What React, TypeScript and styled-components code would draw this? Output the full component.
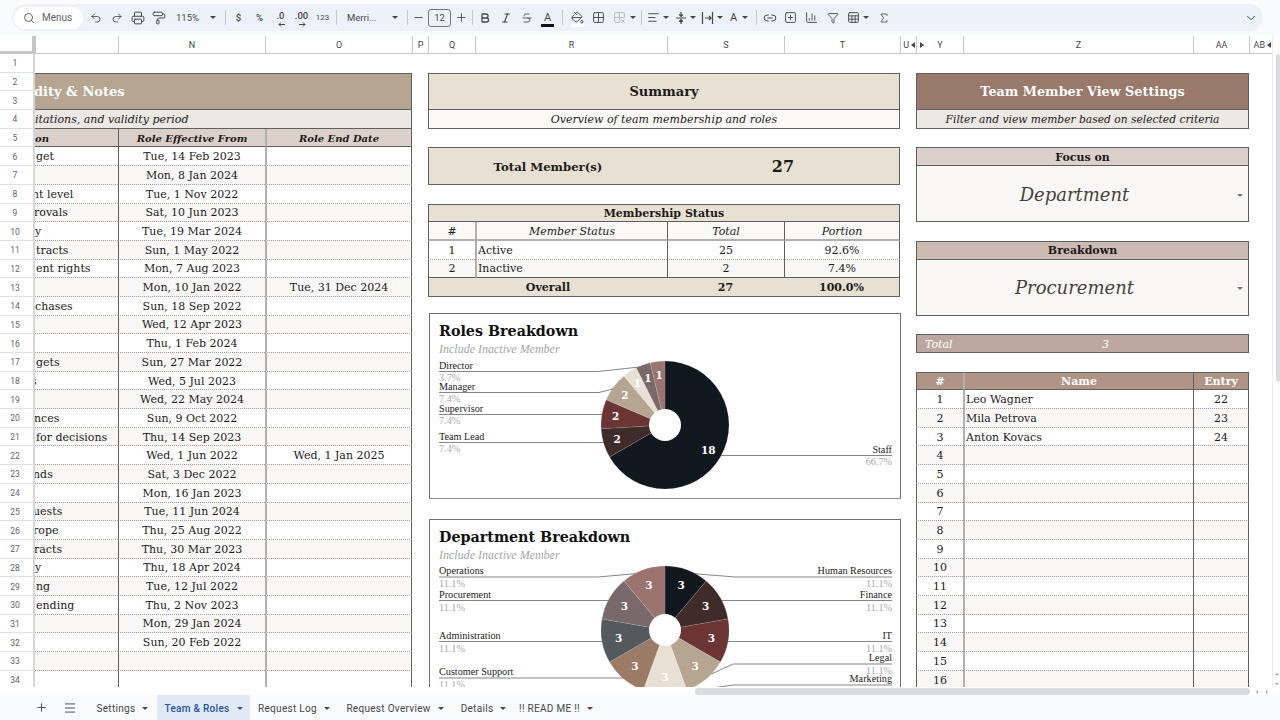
import React from 'react'
import styled, { createGlobalStyle, css } from 'styled-components'
import {
  Search, Undo2, Redo2, Printer, PaintRoller, Minus, Plus, Bold, Italic, Strikethrough,
  PaintBucket, Grid2x2, Grid2x2X, AlignLeft, Link2, SquarePlus, ChartColumn, Funnel, Sheet as SheetIcon,
  Sigma, ChevronDown, Menu,
} from 'lucide-react'

const SERIF = `"DejaVu Serif", "Liberation Serif", serif`
const CHART_SERIF = `"Liberation Serif", serif`
const UI = `Roboto, "Liberation Sans", sans-serif`

const Global = createGlobalStyle`
  html, body { margin: 0; padding: 0; background: #f9fbfd; overflow: hidden; }
  * { box-sizing: border-box; }
`

const Page = styled.div`
  width: 1280px;
  height: 720px;
  display: flex;
  flex-direction: column;
  background: #f9fbfd;
  overflow: hidden;
  font-family: ${UI};
`

/* ---------- toolbar ---------- */

const ToolbarWrap = styled.div`
  height: 36px;
  flex: none;
  padding: 4px 17px 5px 12px;
`

const Pill = styled.div`
  height: 27px;
  border-radius: 14px;
  background: #edf2fa;
  display: flex;
  align-items: center;
  padding-left: 2px;
  color: #444746;
`

const SearchBox = styled.div`
  width: 69px;
  height: 22px;
  border-radius: 11px;
  background: #fff;
  display: flex;
  align-items: center;
  gap: 7px;
  padding-left: 9px;
  font-size: 10px;
  color: #5f6368;
  margin-right: 2px;
`

const Tool = styled.div<{ $w?: number; $muted?: boolean }>`
  width: ${p => p.$w ?? 21}px;
  height: 20px;
  flex: none;
  display: flex;
  align-items: center;
  justify-content: center;
  font-size: 9px;
  color: ${p => (p.$muted ? '#b4b8bc' : '#444746')};
  position: relative;
`

const ToolText = styled.span<{ $size?: number; $weight?: number }>`
  font-size: ${p => p.$size ?? 9}px;
  font-weight: ${p => p.$weight ?? 400};
  white-space: nowrap;
`

const DecimalText = styled(ToolText)`
  margin-top: -5px;
`

const DecimalArrow = styled.svg`
  position: absolute;
  left: 50%;
  bottom: 1px;
  margin-left: -3px;
`

const Caret = styled.i`
  display: inline-block;
  width: 0;
  height: 0;
  flex: none;
  border-left: 3px solid transparent;
  border-right: 3px solid transparent;
  border-top: 3px solid #444746;
`

const Sep = styled.div<{ $mx?: number }>`
  width: 1px;
  height: 15px;
  flex: none;
  background: #c7c7c7;
  margin: 0 ${p => p.$mx ?? 3}px;
`

const SizeBox = styled.div`
  width: 23px;
  height: 18px;
  flex: none;
  margin-left: 3px;
  border: 1px solid #747775;
  border-radius: 3px;
  display: flex;
  align-items: center;
  justify-content: center;
  font-size: 9.5px;
  color: #444746;
`

const ColorBar = styled.span<{ $color: string }>`
  position: absolute;
  left: 4px;
  right: 4px;
  bottom: 1px;
  height: 2.5px;
  background: ${p => p.$color};
`

const Collapse = styled.div`
  margin-left: auto;
  margin-right: 5px;
  display: flex;
`

const WithCaret = styled.div<{ $w: number; $gap?: number }>`
  width: ${p => p.$w}px;
  flex: none;
  display: flex;
  align-items: center;
  gap: ${p => p.$gap ?? 3}px;
  justify-content: center;
`

const Labelled = styled.div<{ $w: number; $pl: number; $pr: number }>`
  width: ${p => p.$w}px;
  flex: none;
  display: flex;
  align-items: center;
  justify-content: space-between;
  padding: 0 ${p => p.$pr}px 0 ${p => p.$pl}px;
`

const ic = { size: 14, strokeWidth: 1.7 }

const Toolbar = () => (
  <ToolbarWrap>
    <Pill>
      <SearchBox><Search size={12} strokeWidth={2} />Menus</SearchBox>
      <Tool><Undo2 {...ic} size={12} /></Tool>
      <Tool><Redo2 {...ic} size={12} /></Tool>
      <Tool><Printer {...ic} /></Tool>
      <Tool><PaintRoller {...ic} /></Tool>
      <Labelled $w={54} $pl={7} $pr={7}><ToolText $size={9.5}>115%</ToolText><Caret /></Labelled>
      <Sep $mx={2} />
      <Tool><ToolText $size={9.5} $weight={500}>$</ToolText></Tool>
      <Tool><ToolText $size={9.5} $weight={500}>%</ToolText></Tool>
      <Tool>
        <DecimalText $size={9.5} $weight={500}>.0</DecimalText>
        <DecimalArrow width="7" height="5" viewBox="0 0 7 5" fill="none" stroke="#444746" strokeWidth="1"><path d="M7 2.5H1M3 .5l-2 2 2 2" /></DecimalArrow>
      </Tool>
      <Tool>
        <DecimalText $size={9.5} $weight={500}>.00</DecimalText>
        <DecimalArrow width="7" height="5" viewBox="0 0 7 5" fill="none" stroke="#444746" strokeWidth="1"><path d="M0 2.5h6M4 .5l2 2-2 2" /></DecimalArrow>
      </Tool>
      <Tool><ToolText $size={8}>123</ToolText></Tool>
      <Sep $mx={3} />
      <Labelled $w={64} $pl={7} $pr={6}><ToolText $size={9.5}>Merri...</ToolText><Caret /></Labelled>
      <Sep $mx={3} />
      <Tool $w={14}><Minus size={13} strokeWidth={1.6} /></Tool>
      <SizeBox>12</SizeBox>
      <Tool $w={20}><Plus size={13} strokeWidth={1.6} /></Tool>
      <Sep $mx={1} />
      <Tool><Bold {...ic} size={12} strokeWidth={2.6} /></Tool>
      <Tool><Italic {...ic} size={12} strokeWidth={2.2} /></Tool>
      <Tool><Strikethrough {...ic} size={12} /></Tool>
      <Tool><ToolText $size={11}>A</ToolText><ColorBar $color="#111" /></Tool>
      <Sep $mx={4} />
      <Tool><PaintBucket {...ic} size={13} /><ColorBar $color="#fff" /></Tool>
      <Tool><Grid2x2 {...ic} size={13} /></Tool>
      <WithCaret $w={30}><Tool $w={14} $muted><Grid2x2X {...ic} size={13} /></Tool><Caret /></WithCaret>
      <Sep $mx={2} />
      <WithCaret $w={28}><AlignLeft {...ic} size={13} /><Caret /></WithCaret>
      <WithCaret $w={27}>
        <svg width="12" height="14" viewBox="0 0 12 14" fill="none" stroke="#444746" strokeWidth="1.2">
          <path d="M1 7h10M6 1v4M4.2 3.5 6 5.3l1.8-1.8M6 13V9M4.2 10.5 6 8.7l1.8 1.8" />
        </svg>
        <Caret />
      </WithCaret>
      <WithCaret $w={25}>
        <svg width="13" height="14" viewBox="0 0 13 14" fill="none" stroke="#444746" strokeWidth="1.2">
          <path d="M1.5 1v12M11.5 1v12M4 7h6M8 5l2 2-2 2" />
        </svg>
        <Caret />
      </WithCaret>
      <WithCaret $w={30} $gap={5}><ToolText $size={11}>A</ToolText><Caret /></WithCaret>
      <Sep $mx={2} />
      <Tool><Link2 {...ic} /></Tool>
      <Tool><SquarePlus {...ic} size={13} /></Tool>
      <Tool><ChartColumn {...ic} size={13} /></Tool>
      <Tool><Funnel {...ic} size={12} /></Tool>
      <WithCaret $w={30}><SheetIcon {...ic} size={13} /><Caret /></WithCaret>
      <Tool><Sigma {...ic} size={12} /></Tool>
      <Collapse><ChevronDown size={14} strokeWidth={1.7} /></Collapse>
    </Pill>
  </ToolbarWrap>
)

/* ---------- sheet grid ---------- */

const RH = 18.69

const SheetArea = styled.div`
  flex: none;
  height: 651px;
  display: flex;
`

const Grid = styled.div`
  width: 1272px;
  height: 651px;
  overflow: hidden;
  background: #fff;
  display: grid;
  grid-template-columns: 35px 83px 147px 147px 16px 47px 192px 117px 116px 16px 47px 230px 56px 23px;
  grid-template-rows: 18px repeat(34, ${RH}px);
`

const VScroll = styled.div`
  width: 8px;
  background: #fff;
  border-left: 1px solid #ececec;
  padding: 18px 0 2px 3px;
  display: flex;
  flex-direction: column;
`

const VThumb = styled.div`
  height: 328px;
  border-radius: 3px;
  background: #dadce0;
`

const ScrollArrows = styled.div`
  margin-top: auto;
  margin-left: -1px;
  display: flex;
  flex-direction: column;
  gap: 8px;
`

const TinyArrow = styled.i<{ $dir: 'up' | 'down' | 'left' | 'right' }>`
  display: block;
  width: 0;
  height: 0;
  ${p => (p.$dir === 'up' || p.$dir === 'down'
    ? `border-left: 2px solid transparent; border-right: 2px solid transparent; border-${p.$dir === 'up' ? 'bottom' : 'top'}: 2px solid #9aa0a6;`
    : `border-top: 2px solid transparent; border-bottom: 2px solid transparent; border-${p.$dir === 'left' ? 'right' : 'left'}: 2px solid #9aa0a6;`)}
`

type Place = { $col: string | number; $row: string | number }

const placed = css<Place>`
  grid-column: ${p => p.$col};
  grid-row: ${p => p.$row};
`

const Corner = styled.div<Place>`
  ${placed}
  background: #fff;
  border-right: 3px solid #c4c7c5;
  border-bottom: 3px solid #c4c7c5;
  z-index: 3;
`

const ColHead = styled.div<Place & { $justify?: string; $pad?: number }>`
  ${placed}
  background: #fff;
  border-left: 1px solid #c7c7c7;
  border-bottom: 1px solid #c7c7c7;
  font-size: 9px;
  color: #444746;
  display: flex;
  align-items: center;
  justify-content: ${p => p.$justify ?? 'center'};
  padding-right: ${p => p.$pad ?? 0}px;
  gap: 2px;
  overflow: hidden;
  position: relative;
`

const HiddenMark = styled.i<{ $dir: 'left' | 'right' }>`
  width: 0;
  height: 0;
  border-top: 3px solid transparent;
  border-bottom: 3px solid transparent;
  ${p => (p.$dir === 'left' ? 'border-right: 4px solid #444;' : 'border-left: 4px solid #444; position: absolute; left: 3px; top: 6px;')}
`

const RowHead = styled.div<Place>`
  ${placed}
  background: #fff;
  border-right: 2px solid #d4d6d8;
  border-bottom: 1px solid #dfe1e3;
  font-size: 8.5px;
  color: #5f6368;
  display: flex;
  align-items: center;
  justify-content: center;
  padding: 1px 3px 0 0;
  z-index: 2;
`

const edge = (v?: string) => v ?? 'none'

type CellProps = Place & {
  $bg?: string
  $top?: string
  $right?: string
  $bottom?: string
  $left?: string
  $align?: string
  $pad?: number
  $color?: string
  $size?: number
  $weight?: number
  $italic?: boolean
  $indent?: number
}

const Cell = styled.div<CellProps>`
  ${placed}
  min-width: 0;
  overflow: hidden;
  white-space: nowrap;
  display: flex;
  align-items: center;
  justify-content: ${p => p.$align ?? 'center'};
  padding: 1px ${p => p.$pad ?? 0}px 0;
  background: ${p => p.$bg ?? 'transparent'};
  border-top: ${p => edge(p.$top)};
  border-right: ${p => edge(p.$right)};
  border-bottom: ${p => edge(p.$bottom)};
  border-left: ${p => edge(p.$left)};
  color: ${p => p.$color ?? '#1c1a19'};
  font-family: ${SERIF};
  font-size: ${p => p.$size ?? 11}px;
  font-weight: ${p => p.$weight ?? 400};
  font-style: ${p => (p.$italic ? 'italic' : 'normal')};
  & > span { margin-left: ${p => p.$indent ?? 0}px; }
`

const DropArrow = styled.i`
  position: absolute;
  right: 5px;
  top: 50%;
  width: 0;
  height: 0;
  border-left: 3px solid transparent;
  border-right: 3px solid transparent;
  border-top: 3px solid #8a6f62;
`

const DropCell = styled(Cell)`
  position: relative;
  padding-right: 16px;
`

/* ---------- charts ---------- */

const ChartBox = styled.div<Place & { $h: number; $mt: number }>`
  ${placed}
  align-self: start;
  height: ${p => p.$h}px;
  margin: ${p => p.$mt}px -1px 0 1px;
  background: #fff;
  border: 1px solid #6f6f6f;
  border-bottom-color: #8c8c8c;
  z-index: 1;
`

const ChartTitle = styled.text`
  font-family: ${SERIF};
  font-weight: 700;
  font-size: 14.3px;
  fill: #111;
`

const ChartSub = styled.text`
  font-family: ${CHART_SERIF};
  font-style: italic;
  font-size: 12px;
  fill: #a5a5a5;
`

const LegendName = styled.text`
  font-family: ${CHART_SERIF};
  font-size: 10.2px;
  fill: #222;
`

const LegendPct = styled.text`
  font-family: ${CHART_SERIF};
  font-size: 10.2px;
  fill: #a8a8a8;
`

const SliceNum = styled.text`
  font-family: ${SERIF};
  font-weight: 700;
  font-size: 10.5px;
  fill: #fff;
  text-anchor: middle;
`

type Slice = { v: number; color: string }
type Leg = { name: string; pct: string; y: number; base?: number; pctBase?: number; side: 'l' | 'r'; to: [number, number][] }

const Pie = ({ cx, cy, slices, big }: { cx: number; cy: number; slices: Slice[]; big?: boolean }) => {
  const total = slices.reduce((s, x) => s + x.v, 0)
  const r = 64
  let acc = 0
  let run = 0
  const pt = (a: number, rad: number) => [cx + rad * Math.sin(a), cy - rad * Math.cos(a)]
  return (
    <g>
      {slices.map((s, i) => {
        const a0 = (acc / total) * Math.PI * 2
        acc += s.v
        const a1 = (acc / total) * Math.PI * 2
        const [x0, y0] = pt(a0, r)
        const [x1, y1] = pt(a1, r)
        const large = a1 - a0 > Math.PI ? 1 : 0
        return (
          <path
            key={i}
            d={`M${cx} ${cy}L${x0} ${y0}A${r} ${r} 0 ${large} 1 ${x1} ${y1}Z`}
            fill={s.color}
            stroke="#fff"
            strokeOpacity={0.18}
            strokeWidth={0.6}
          />
        )
      })}
      <circle cx={cx} cy={cy} r={16} fill="#fff" />
      {slices.map((s, i) => {
        const mid = ((run + s.v / 2) / total) * Math.PI * 2
        run += s.v
        const [x, y] = pt(mid, big ? 47 : s.v === 1 ? 50 : 50)
        return <SliceNum key={i} x={x} y={y + 3.5}>{s.v}</SliceNum>
      })}
    </g>
  )
}

const Legend = ({ leg, width }: { leg: Leg; width: number }) => {
  const startX = leg.side === 'l' ? 10 : width - 9
  const points = [[startX, leg.y], ...leg.to].map(p => p.join(',')).join(' ')
  const last = leg.to[leg.to.length - 1]
  const anchor = leg.side === 'l' ? 'start' : 'end'
  return (
    <g>
      <polyline points={points} fill="none" stroke="#777" strokeWidth={0.9} />
      <circle cx={last[0]} cy={last[1]} r={1.5} fill="#8a8a8a" />
      <LegendName x={startX} y={leg.base ?? leg.y - 3} textAnchor={anchor}>{leg.name}</LegendName>
      <LegendPct x={startX} y={leg.pctBase ?? leg.y + 10} textAnchor={anchor}>{leg.pct}</LegendPct>
    </g>
  )
}

const ROLE_SLICES: Slice[] = [
  { v: 18, color: '#10171f' },
  { v: 2, color: '#3f2c2a' },
  { v: 2, color: '#6a3534' },
  { v: 2, color: '#b5a591' },
  { v: 1, color: '#e8e0d2' },
  { v: 1, color: '#79696a' },
  { v: 1, color: '#9b7470' },
]

const ROLE_LEGEND: Leg[] = [
  { name: 'Director', pct: '3.7%', y: 58.5, base: 56, pctBase: 68, side: 'l', to: [[169, 58.5], [229, 52]] },
  { name: 'Manager', pct: '7.4%', y: 79.5, base: 77, pctBase: 89, side: 'l', to: [[170, 79.5], [184, 76]] },
  { name: 'Supervisor', pct: '7.4%', y: 101.5, base: 99, pctBase: 111, side: 'l', to: [[176, 101.5]] },
  { name: 'Team Lead', pct: '7.4%', y: 129.5, base: 127, pctBase: 139, side: 'l', to: [[178, 129.5]] },
  { name: 'Staff', pct: '66.7%', y: 142.5, base: 140, pctBase: 152, side: 'r', to: [[288, 142.5]] },
]

const DEPT_SLICES: Slice[] = [
  '#10171f', '#3f2c2a', '#6a3534', '#b5a591', '#e8e0d2', '#9b7a66', '#54595e', '#79696a', '#9b7470',
].map(color => ({ v: 3, color }))

const DEPT_LEGEND: Leg[] = [
  { name: 'Operations', pct: '11.1%', y: 58, side: 'l', to: [[169, 58], [214, 54]] },
  { name: 'Procurement', pct: '11.1%', y: 81.5, side: 'l', to: [[183, 81.5]] },
  { name: 'Administration', pct: '11.1%', y: 122.5, side: 'l', to: [[176, 122.5]] },
  { name: 'Customer Support', pct: '11.1%', y: 159, side: 'l', to: [[198, 159]] },
  { name: 'Human Resources', pct: '11.1%', y: 58, side: 'r', to: [[306, 58], [257, 54]] },
  { name: 'Finance', pct: '11.1%', y: 81.5, side: 'r', to: [[289, 81.5]] },
  { name: 'IT', pct: '11.1%', y: 122.5, side: 'r', to: [[296, 122.5]] },
  { name: 'Legal', pct: '11.1%', y: 145, side: 'r', to: [[304, 145], [276, 158]] },
  { name: 'Marketing', pct: '11.1%', y: 166, side: 'r', to: [[304, 166], [262, 172]] },
]

const Chart = ({ title, h, cy, mt, slices, legend, big, ...place }: Place & {
  title: string; h: number; cy: number; mt: number; slices: Slice[]; legend: Leg[]; big?: boolean
}) => (
  <ChartBox {...place} $h={h} $mt={mt}>
    <svg width={470} height={h - 2} viewBox={`1 1 470 ${h - 2}`} style={{ display: 'block' }}>
      <ChartTitle x={10} y={23}>{title}</ChartTitle>
      <ChartSub x={10} y={40}>Include Inactive Member</ChartSub>
      {legend.map(l => <Legend key={l.name} leg={l} width={472} />)}
      <Pie cx={236} cy={cy} slices={slices} big={big} />
    </svg>
  </ChartBox>
)

/* ---------- data ---------- */

const DARK = '1px solid #5f5f5f'
const GREY = '2px solid #b0b0b0'
const DOT = '1px dotted #9a9a9a'
const SHADE = '#f9f8f6'

const ROLE_ROWS: [string, number, string, string?][] = [
  ['get', 0, 'Tue, 14 Feb 2023'],
  ['', 0, 'Mon, 8 Jan 2024'],
  ['nt level', -4, 'Tue, 1 Nov 2022'],
  ['rovals', -2, 'Sat, 10 Jun 2023'],
  ['y', -1, 'Tue, 19 Mar 2024'],
  ['tracts', 0, 'Sun, 1 May 2022'],
  ['ent rights', 0, 'Mon, 7 Aug 2023'],
  ['', 0, 'Mon, 10 Jan 2022', 'Tue, 31 Dec 2024'],
  ['chases', -1, 'Sun, 18 Sep 2022'],
  ['', 0, 'Wed, 12 Apr 2023'],
  ['', 0, 'Thu, 1 Feb 2024'],
  ['gets', 0, 'Sun, 27 Mar 2022'],
  ['s', -5, 'Wed, 5 Jul 2023'],
  ['', 0, 'Wed, 22 May 2024'],
  ['nces', -2, 'Sun, 9 Oct 2022'],
  ['for decisions', 0, 'Thu, 14 Sep 2023'],
  ['', 0, 'Wed, 1 Jun 2022', 'Wed, 1 Jan 2025'],
  ['nds', -3, 'Sat, 3 Dec 2022'],
  ['', 0, 'Mon, 16 Jan 2023'],
  ['uests', -3, 'Tue, 11 Jun 2024'],
  ['rope', -3, 'Thu, 25 Aug 2022'],
  ['racts', -2, 'Thu, 30 Mar 2023'],
  ['y', -1, 'Thu, 18 Apr 2024'],
  ['ng', 0, 'Tue, 12 Jul 2022'],
  ['ending', 0, 'Thu, 2 Nov 2023'],
  ['', 0, 'Mon, 29 Jan 2024'],
  ['', 0, 'Sun, 20 Feb 2022'],
  ['', 0, ''],
  ['', 0, ''],
]

const MEMBERS: [string, string][] = [['Leo Wagner', '22'], ['Mila Petrova', '23'], ['Anton Kovacs', '24']]

const COLS: [string, number][] = [
  ['', 2], ['N', 3], ['O', 4], ['P', 5], ['Q', 6], ['R', 7], ['S', 8], ['T', 9],
]

// grid line of a sheet row: the first grid row is the column header
const r = (n: number) => n + 1
const span = (a: number, b: number) => `${r(a)} / ${r(b) + 1}`

const LeftTable = () => (
  <>
    <Cell $col="2 / 5" $row={span(2, 3)} $bg="#b5a591" $top={DARK} $right={DARK} $bottom={DARK} $align="flex-start" $color="#fff" $size={13} $weight={700} $indent={-1}><span>dity &amp; Notes</span></Cell>
    <Cell $col="2 / 5" $row={r(4)} $bg="#ece8e3" $right={DARK} $bottom={DARK} $align="flex-start" $italic $size={11}><span>itations, and validity period</span></Cell>
    <Cell $col={2} $row={r(5)} $bg="#dcd1ca" $bottom={DARK} $align="flex-start" $italic $weight={700} $size={10}><span>on</span></Cell>
    <Cell $col={3} $row={r(5)} $bg="#dcd1ca" $left={DARK} $bottom={DARK} $italic $weight={700} $size={10}>Role Effective From</Cell>
    <Cell $col={4} $row={r(5)} $bg="#dcd1ca" $left={GREY} $right={DARK} $bottom={DARK} $italic $weight={700} $size={10}>Role End Date</Cell>
    {ROLE_ROWS.map(([note, indent, from, to], i) => {
      const row = r(6 + i)
      const bg = i % 2 ? SHADE : '#fff'
      return (
        <React.Fragment key={i}>
          <Cell $col={2} $row={row} $bg={bg} $bottom={DOT} $align="flex-start" $indent={indent + 1}><span>{note}</span></Cell>
          <Cell $col={3} $row={row} $bg={bg} $left={DARK} $bottom={DOT}>{from}</Cell>
          <Cell $col={4} $row={row} $bg={bg} $left={GREY} $right={DARK} $bottom={DOT}>{to}</Cell>
        </React.Fragment>
      )
    })}
  </>
)

const SummaryTable = () => (
  <>
    <Cell $col="6 / 10" $row={span(2, 3)} $bg="#e8e0d2" $top={DARK} $left={DARK} $right={DARK} $bottom={DARK} $size={13} $weight={700}>Summary</Cell>
    <Cell $col="6 / 10" $row={r(4)} $bg="#fbf9f5" $left={DARK} $right={DARK} $bottom={DARK} $italic>Overview of team membership and roles</Cell>
    <Cell $col="6 / 8" $row={span(6, 7)} $bg="#e8e0d2" $top={DARK} $left={DARK} $bottom={DARK} $size={11.7} $weight={700}>Total Member(s)</Cell>
    <Cell $col="8 / 10" $row={span(6, 7)} $bg="#e8e0d2" $top={DARK} $right={DARK} $bottom={DARK} $size={16} $weight={700}>27</Cell>
    <Cell $col="6 / 10" $row={r(9)} $bg="#e8e0d2" $top={DARK} $left={DARK} $right={DARK} $bottom={DARK} $weight={700}>Membership Status</Cell>
    <Cell $col={6} $row={r(10)} $bg="#fbf9f5" $left={DARK} $bottom={GREY} $italic>#</Cell>
    <Cell $col={7} $row={r(10)} $bg="#fbf9f5" $left={GREY} $bottom={GREY} $italic>Member Status</Cell>
    <Cell $col={8} $row={r(10)} $bg="#fbf9f5" $left={DARK} $bottom={GREY} $italic>Total</Cell>
    <Cell $col={9} $row={r(10)} $bg="#fbf9f5" $left={DARK} $right={DARK} $bottom={GREY} $italic>Portion</Cell>
    {[['1', 'Active', '25', '92.6%'], ['2', 'Inactive', '2', '7.4%']].map(([n, name, total, pct], i) => {
      const row = r(11 + i)
      const bg = i ? SHADE : '#fff'
      const bottom = i ? DARK : DOT
      return (
        <React.Fragment key={n}>
          <Cell $col={6} $row={row} $bg={bg} $left={DARK} $bottom={bottom}>{n}</Cell>
          <Cell $col={7} $row={row} $bg={bg} $left={GREY} $bottom={bottom} $align="flex-start" $pad={1}>{name}</Cell>
          <Cell $col={8} $row={row} $bg={bg} $left={DARK} $bottom={bottom}>{total}</Cell>
          <Cell $col={9} $row={row} $bg={bg} $left={DARK} $right={DARK} $bottom={bottom}>{pct}</Cell>
        </React.Fragment>
      )
    })}
    <Cell $col="6 / 8" $row={r(13)} $bg="#e8e0d2" $left={DARK} $bottom={DARK} $weight={700}>Overall</Cell>
    <Cell $col={8} $row={r(13)} $bg="#e8e0d2" $bottom={DARK} $weight={700}>27</Cell>
    <Cell $col={9} $row={r(13)} $bg="#e8e0d2" $right={DARK} $bottom={DARK} $weight={700}>100.0%</Cell>
    <Chart $col="6 / 10" $row={r(15)} title="Roles Breakdown" h={186} cy={112} mt={-3} slices={ROLE_SLICES} legend={ROLE_LEGEND} />
    <Chart $col="6 / 10" $row={r(26)} title="Department Breakdown" h={250} cy={111} mt={-2} slices={DEPT_SLICES} legend={DEPT_LEGEND} big />
  </>
)

const ViewSettings = () => (
  <>
    <Cell $col="11 / 14" $row={span(2, 3)} $bg="#99796a" $top={DARK} $left={DARK} $right={DARK} $bottom={DARK} $color="#fff" $size={12.8} $weight={700}>Team Member View Settings</Cell>
    <Cell $col="11 / 14" $row={r(4)} $bg="#ece8e3" $left={DARK} $right={DARK} $bottom={DARK} $italic $size={10.7}>Filter and view member based on selected criteria</Cell>
    <Cell $col="11 / 14" $row={r(6)} $bg="#dcd1ca" $top={DARK} $left={DARK} $right={DARK} $bottom={DARK} $weight={700}>Focus on</Cell>
    <DropCell $col="11 / 14" $row={span(7, 9)} $bg="#f9f8f6" $left={DARK} $right={DARK} $bottom={DARK} $italic $size={18} $color="#4a403b">Department<DropArrow /></DropCell>
    <Cell $col="11 / 14" $row={r(11)} $bg="#ccbbb3" $top={DARK} $left={DARK} $right={DARK} $bottom={DARK} $weight={700}>Breakdown</Cell>
    <DropCell $col="11 / 14" $row={span(12, 14)} $bg="#f9f8f6" $left={DARK} $right={DARK} $bottom={DARK} $italic $size={18} $color="#4a403b">Procurement<DropArrow /></DropCell>
    <Cell $col={11} $row={r(16)} $bg="#bda89f" $top={DARK} $left={DARK} $bottom={DARK} $align="flex-start" $pad={8} $italic $color="#fff">Total</Cell>
    <Cell $col="12 / 14" $row={r(16)} $bg="#bda89f" $top={DARK} $right={DARK} $bottom={DARK} $italic $color="#fff">3</Cell>
    <Cell $col={11} $row={r(18)} $bg="#b09486" $top={DARK} $left={DARK} $bottom={DARK} $color="#fff" $weight={700}>#</Cell>
    <Cell $col={12} $row={r(18)} $bg="#b09486" $top={DARK} $left={GREY} $bottom={DARK} $color="#fff" $weight={700}>Name</Cell>
    <Cell $col={13} $row={r(18)} $bg="#b09486" $top={DARK} $left={DARK} $right={DARK} $bottom={DARK} $color="#fff" $weight={700}>Entry</Cell>
    {Array.from({ length: 16 }, (_, i) => {
      const row = r(19 + i)
      const bg = i % 2 ? SHADE : '#fff'
      const m = MEMBERS[i]
      return (
        <React.Fragment key={i}>
          <Cell $col={11} $row={row} $bg={bg} $left={DARK} $bottom={DOT}>{i + 1}</Cell>
          <Cell $col={12} $row={row} $bg={bg} $left={GREY} $bottom={DOT} $align="flex-start" $pad={1}>{m?.[0]}</Cell>
          <Cell $col={13} $row={row} $bg={bg} $left={DARK} $right={DARK} $bottom={DOT}>{m?.[1]}</Cell>
        </React.Fragment>
      )
    })}
  </>
)

const Sheet = () => (
  <SheetArea>
    <Grid>
      <Corner $col={1} $row={1} />
      {COLS.map(([name, col]) => <ColHead key={col} $col={col} $row={1}>{name}</ColHead>)}
      <ColHead $col={10} $row={1} $justify="flex-end" $pad={1}>U<HiddenMark $dir="left" /></ColHead>
      <ColHead $col={11} $row={1}><HiddenMark $dir="right" />Y</ColHead>
      <ColHead $col={12} $row={1}>Z</ColHead>
      <ColHead $col={13} $row={1}>AA</ColHead>
      <ColHead $col={14} $row={1} $justify="flex-end" $pad={1}>AB<HiddenMark $dir="left" /></ColHead>
      {Array.from({ length: 34 }, (_, i) => (
        <RowHead key={i} $col={1} $row={r(i + 1)}>{i + 1}</RowHead>
      ))}
      <LeftTable />
      <SummaryTable />
      <ViewSettings />
    </Grid>
    <VScroll>
      <VThumb />
      <ScrollArrows><TinyArrow $dir="up" /><TinyArrow $dir="down" /></ScrollArrows>
    </VScroll>
  </SheetArea>
)

/* ---------- bottom ---------- */

const HScroll = styled.div`
  flex: none;
  height: 8px;
  background: #fff;
  padding: 1px 0 0 695px;
  display: flex;
  align-items: flex-start;
`

const HThumb = styled.div`
  width: 555px;
  height: 7px;
  border-radius: 3px;
  background: #dadce0;
`

const HArrows = styled.div`
  display: flex;
  gap: 8px;
  margin: 2px 0 0 6px;
`

const TabBar = styled.div`
  flex: 1;
  display: flex;
  align-items: stretch;
  padding-left: 31px;
  background: #f9fbfd;
  color: #444746;
`

const TabIcon = styled.div<{ $w: number }>`
  width: ${p => p.$w}px;
  flex: none;
  display: flex;
  align-items: center;
  justify-content: center;
`

const Tab = styled.div<{ $active?: boolean; $w: number }>`
  width: ${p => p.$w}px;
  flex: none;
  display: flex;
  align-items: center;
  justify-content: center;
  gap: 7px;
  padding-top: 1px;
  font-size: 10px;
  letter-spacing: 0.3px;
  font-weight: ${p => (p.$active ? 500 : 400)};
  color: ${p => (p.$active ? '#1f56a8' : '#444746')};
  background: ${p => (p.$active ? '#e1e9f7' : 'transparent')};
  ${Caret} { border-top-color: ${p => (p.$active ? '#1f56a8' : '#444746')}; }
`

const TABS: [string, number, boolean?][] = [
  ['Settings', 69],
  ['Team & Roles', 93, true],
  ['Request Log', 88],
  ['Request Overview', 114],
  ['Details', 63],
  ['!! READ ME !!', 82],
]

const Tabs = () => (
  <TabBar>
    <TabIcon $w={20}><Plus size={13} strokeWidth={1.7} /></TabIcon>
    <TabIcon $w={37}><Menu size={14} strokeWidth={1.6} /></TabIcon>
    {TABS.map(([name, w, active]) => (
      <Tab key={name} $w={w} $active={active}>{name}<Caret /></Tab>
    ))}
  </TabBar>
)

export default function App() {
  return (
    <Page>
      <Global />
      <Toolbar />
      <Sheet />
      <HScroll>
        <HThumb />
        <HArrows><TinyArrow $dir="left" /><TinyArrow $dir="right" /></HArrows>
      </HScroll>
      <Tabs />
    </Page>
  )
}
